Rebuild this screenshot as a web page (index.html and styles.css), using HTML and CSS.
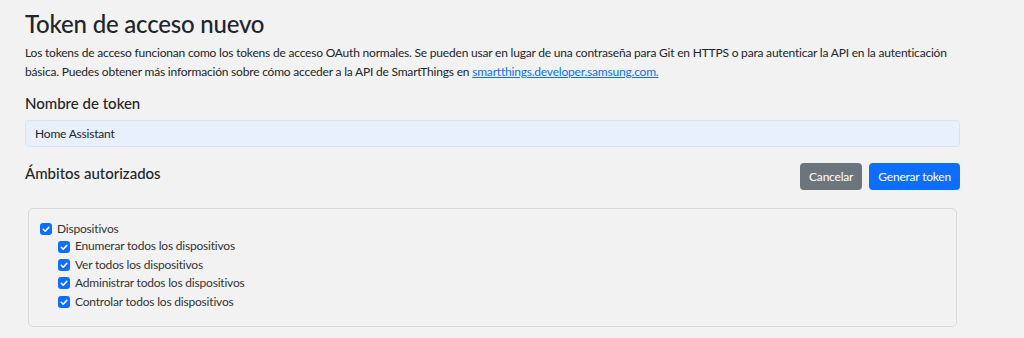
FILE: index.html
```html
<!DOCTYPE html>
<html>
<head>
    <title>Token de acceso nuevo</title>
    <link rel="stylesheet" href="styles.css">
</head>
<body>
    <div class="container">
        <h2 class="title">Token de acceso nuevo</h2>
        <p class="intro">Los tokens de acceso funcionan como los tokens de acceso OAuth normales. Se pueden usar en lugar de una contraseña para Git en HTTPS o para autenticar la API en la autenticación básica. Puedes obtener más información sobre cómo acceder a la API de SmartThings en <a href="#">smartthings.developer.samsung.com.</a></p>

        <form id="tokenForm">
            <label class="field-label" for="tokenName">Nombre de token</label>
            <input type="text" id="tokenName" value="Home Assistant">

            <div class="scopes-header">
                <h3>Ámbitos autorizados</h3>
                <div class="actions">
                    <button type="button" class="btn btn-secondary">Cancelar</button>
                    <button type="submit" class="btn btn-primary">Generar token</button>
                </div>
            </div>

            <div class="scopes">
                <label class="check"><span class="box"><svg viewBox="0 0 12 12"><path d="M3.3 6.3l1.9 1.9 3.6-3.8"/></svg></span>Dispositivos</label>
                <div class="sub-scopes">
                    <label class="check"><span class="box"><svg viewBox="0 0 12 12"><path d="M3.3 6.3l1.9 1.9 3.6-3.8"/></svg></span>Enumerar todos los dispositivos</label>
                    <label class="check"><span class="box"><svg viewBox="0 0 12 12"><path d="M3.3 6.3l1.9 1.9 3.6-3.8"/></svg></span>Ver todos los dispositivos</label>
                    <label class="check"><span class="box"><svg viewBox="0 0 12 12"><path d="M3.3 6.3l1.9 1.9 3.6-3.8"/></svg></span>Administrar todos los dispositivos</label>
                    <label class="check"><span class="box"><svg viewBox="0 0 12 12"><path d="M3.3 6.3l1.9 1.9 3.6-3.8"/></svg></span>Controlar todos los dispositivos</label>
                </div>
            </div>
        </form>
    </div>
</body>
</html>
```

FILE: styles.css
```css
body {
    font-family: Lato, "Open Sans", Arial, sans-serif;
    background-color: #f2f2f2;
    color: #212529;
    margin: 0;
    padding: 0;
}

.container {
    width: 935px;
    padding: 9px 0 0 25px;
}

.title {
    font-size: 24px;
    font-weight: 500;
    letter-spacing: -0.2px;
    line-height: 30px;
    margin: 0 0 4px 0;
}

.intro {
    font-size: 12px;
    letter-spacing: -0.2px;
    line-height: 19px;
    margin: 0 0 12px 0;
}

.intro a {
    color: #0d6efd;
}

.field-label {
    display: block;
    font-size: 15px;
    font-weight: 500;
    line-height: 20px;
    margin-bottom: 7px;
}

#tokenName {
    width: 100%;
    height: 27px;
    padding: 0 9px;
    border: 1px solid #dee2e6;
    border-radius: 4px;
    background-color: #e8f0fe;
    font-family: inherit;
    font-size: 12px;
    letter-spacing: -0.2px;
    color: #212529;
    box-sizing: border-box;
}

.scopes-header {
    display: flex;
    justify-content: space-between;
    align-items: flex-start;
    margin-top: 16px;
}

.scopes-header h3 {
    font-size: 15px;
    font-weight: 500;
    line-height: 20px;
    margin: 0;
}

.actions {
    display: flex;
    gap: 7px;
}

.btn {
    height: 27px;
    padding: 0 9px;
    border: none;
    border-radius: 4px;
    color: white;
    font-family: inherit;
    font-size: 12px;
    letter-spacing: -0.2px;
    cursor: pointer;
}

.btn-secondary {
    background-color: #6c757d;
}

.btn-primary {
    background-color: #0d6efd;
}

.scopes {
    margin: 18px 3px 0 3px;
    padding: 11px 12px 14px 11px;
    border: 1px solid #d9d9d9;
    border-radius: 5px;
    height: 92px;
}

.check {
    display: flex;
    align-items: center;
    gap: 5px;
    font-size: 12px;
    letter-spacing: -0.2px;
    line-height: 18.4px;
    color: #333;
}

.box {
    width: 12px;
    height: 12px;
    border-radius: 3px;
    background-color: #0d6efd;
    display: flex;
}

.box svg {
    width: 12px;
    height: 12px;
    fill: none;
    stroke: white;
    stroke-width: 1.6;
    stroke-linecap: round;
    stroke-linejoin: round;
}

.sub-scopes {
    padding-left: 18px;
    margin-top: -1px;
}
```
